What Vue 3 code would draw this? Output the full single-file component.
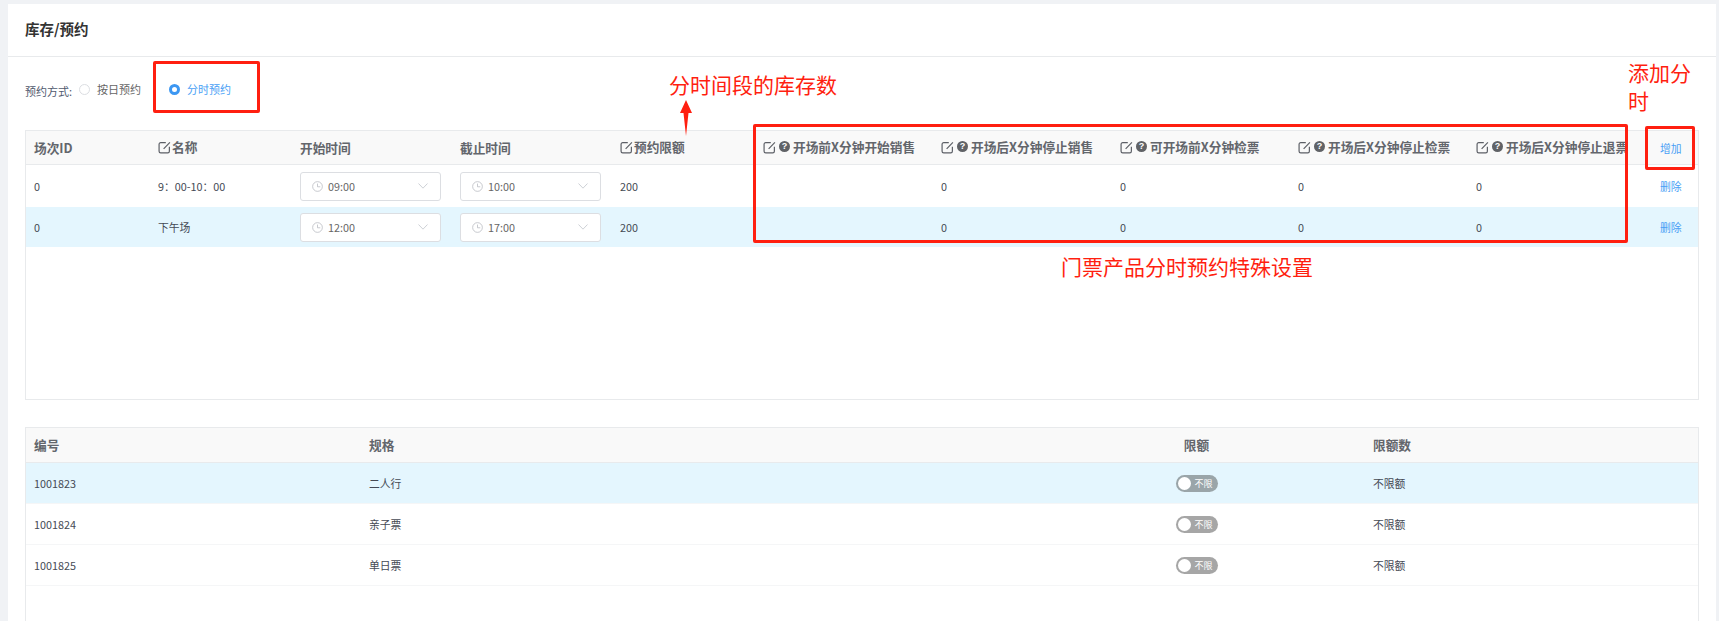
<template>
  <div class="page">
    <div class="page-title">库存/预约</div>

    <div class="mode-row">
      <span class="mode-label">预约方式:</span>
      <label class="radio">
        <span class="radio-dot"></span>
        <span>按日预约</span>
      </label>
      <label class="radio radio-on">
        <span class="radio-dot"></span>
        <span>分时预约</span>
      </label>
    </div>

    <div class="box box-sessions">
      <table class="grid">
        <colgroup>
          <col v-for="w in sessionCols" :key="w.key" :style="{ width: w.width + 'px' }" />
        </colgroup>
        <thead>
          <tr>
            <th>场次ID</th>
            <th><span class="th-in"><svg class="edit" viewBox="0 0 12 12"><path d="M7.2 1.5H2.5a1.5 1.5 0 0 0-1.5 1.5v6.5A1.5 1.5 0 0 0 2.5 11H9a1.5 1.5 0 0 0 1.500-1.500V5.200M5.200 7.300 11 1.300"/></svg>名称</span></th>
            <th>开始时间</th>
            <th>截止时间</th>
            <th><span class="th-in"><svg class="edit" viewBox="0 0 12 12"><path d="M7.2 1.5H2.5a1.5 1.5 0 0 0-1.5 1.5v6.5A1.5 1.5 0 0 0 2.5 11H9a1.5 1.500 0 0 0 1.500-1.500V5.200M5.200 7.300 11 1.300"/></svg>预约限额</span></th>
            <th v-for="h in ruleHeads" :key="h">
              <span class="th-in">
                <svg class="edit" viewBox="0 0 12 12"><path d="M7.2 1.5H2.5a1.5 1.5 0 0 0-1.5 1.5v6.5A1.5 1.5 0 0 0 2.5 11H9a1.5 1.500 0 0 0 1.500-1.500V5.200M5.200 7.300 11 1.300"/></svg>
                <i class="help">?</i>{{ h }}
              </span>
            </th>
            <th class="link">增加</th>
          </tr>
        </thead>
        <tbody>
          <tr v-for="(s, i) in sessions" :key="i" :class="{ 'row-on': s.active }">
            <td>{{ s.id }}</td>
            <td>{{ s.name }}</td>
            <td v-for="t in [s.start, s.end]" :key="t">
              <div class="time">
                <svg class="clock" viewBox="0 0 12 12"><circle cx="6" cy="6" r="5.300"/><path d="M6 2.800V6.300H9"/></svg>
                <span>{{ t }}</span>
                <svg class="chev" viewBox="0 0 10 6"><path d="M.5.5 5 5.200 9.500.5"/></svg>
              </div>
            </td>
            <td>{{ s.limit }}</td>
            <td></td>
            <td>0</td>
            <td>0</td>
            <td>0</td>
            <td>0</td>
            <td class="link">删除</td>
          </tr>
        </tbody>
      </table>
    </div>

    <div class="box box-specs">
      <table class="grid specs">
        <colgroup>
          <col v-for="w in specCols" :key="w.key" :style="{ width: w.width + 'px' }" />
        </colgroup>
        <thead>
          <tr>
            <th>编号</th>
            <th>规格</th>
            <th class="mid">限额</th>
            <th>限额数</th>
          </tr>
        </thead>
        <tbody>
          <tr v-for="s in specs" :key="s.no" :class="{ 'row-on': s.active }">
            <td>{{ s.no }}</td>
            <td>{{ s.name }}</td>
            <td class="mid">
              <span class="switch"><span class="knob"></span>不限</span>
            </td>
            <td>不限额</td>
          </tr>
        </tbody>
      </table>
    </div>

    <!-- 标注 -->
    <div class="mark mark-mode"></div>
    <div class="mark mark-rules"></div>
    <div class="mark mark-add"></div>
    <div class="note note-stock">分时间段的库存数</div>
    <div class="note note-rules">门票产品分时预约特殊设置</div>
    <div class="note note-add">添加分时</div>
    <svg class="arrow" viewBox="0 0 14 36"><path d="M7 0 13 13H9.500L7 36 4.500 13H1Z"/></svg>
  </div>
</template>

<script setup>
const sessionCols = [123, 142, 160, 160, 143, 178, 179, 178, 178, 184, 48].map((width, key) => ({ key, width }))
const specCols = [334, 669, 335, 335].map((width, key) => ({ key, width }))

const ruleHeads = [
  '开场前X分钟开始销售',
  '开场后X分钟停止销售',
  '可开场前X分钟检票',
  '开场后X分钟停止检票',
  '开场后X分钟停止退票'
]

const sessions = [
  { id: 0, name: '9：00-10：00', start: '09:00', end: '10:00', limit: 200, active: false },
  { id: 0, name: '下午场', start: '12:00', end: '17:00', limit: 200, active: true }
]

const specs = [
  { no: 1001823, name: '二人行', active: true },
  { no: 1001824, name: '亲子票', active: false },
  { no: 1001825, name: '单日票', active: false }
]
</script>

<style>
html,
body {
  margin: 0;
  height: 100%;
  background: #f0f2f5;
  overflow: hidden;
}
</style>

<style scoped>
.page {
  position: relative;
  box-sizing: border-box;
  margin: 4px 3px 0 8px;
  height: 617px;
  overflow: hidden;
  background: #fff;
  color: #454a55;
  font-family: "Noto Sans CJK SC", "Noto Sans", sans-serif;
  font-size: 10.8px;
}

.page-title {
  height: 52px;
  line-height: 49px;
  padding-left: 17px;
  border-bottom: 1px solid #e8eaec;
  font-size: 14.5px;
  font-weight: 700;
  color: #333;
}

.mode-row {
  display: flex;
  align-items: center;
  height: 64px;
  padding-left: 17px;
}

.mode-label {
  width: 54px;
  padding-top: 3px;
  color: #515a6e;
  font-size: 11px;
}

.radio {
  display: flex;
  align-items: center;
  width: 90px;
  color: #666;
  font-size: 11px;
}

.radio-dot {
  box-sizing: border-box;
  width: 11px;
  height: 11px;
  margin-right: 7px;
  border: 1px solid #dcdee2;
  border-radius: 50%;
  background: #fff;
}

.radio-on {
  color: #4a9ff5;
}

.radio-on .radio-dot {
  border: 3px solid #3c97f2;
}

.box {
  margin: 0 17px 0 17px;
  border: 1px solid #e8eaec;
  overflow: hidden;
}

.box-sessions {
  box-sizing: border-box;
  height: 270px;
  margin-top: 9px;
}

.box-specs {
  height: 300px;
  margin-top: 27px;
}

.grid {
  width: 1673px;
  border-collapse: collapse;
  table-layout: fixed;
}

.grid th {
  height: 33px;
  padding: 0 0 1px 9px;
  border-bottom: 1px solid #e8eaec;
  background: #f9f9f9;
  color: #63666c;
  font-size: 12.7px;
  font-weight: 700;
  text-align: left;
  white-space: nowrap;
  overflow: hidden;
}

.box-sessions th {
  height: 32px;
}

.grid th:first-child,
.grid td:first-child {
  padding-left: 8px;
}

.grid td {
  padding: 0 0 0 9px;
}

.box-sessions tbody tr:first-child td {
  height: 42px;
}

.box-sessions tbody tr:last-child td {
  height: 40px;
}

.row-on td {
  background: #e4f6fe;
}

.th-in {
  display: inline-flex;
  align-items: center;
}

.edit {
  flex: none;
  width: 13px;
  height: 13px;
  margin-right: 1px;
  margin-top: 2px;
  fill: none;
  stroke: #5c5f66;
  stroke-width: 1.1;
}

.help {
  flex: none;
  width: 11px;
  height: 11px;
  margin: 0 3px 0 2px;
  border-radius: 50%;
  background: #606266;
  color: #fff;
  font-family: "Liberation Sans", sans-serif;
  font-size: 9px;
  font-style: normal;
  font-weight: 700;
  line-height: 11px;
  text-align: center;
}

.grid .link {
  color: #4a9ff5;
  font-size: 10.8px;
  font-weight: 400;
}

.grid th.link {
  padding-top: 1px;
  padding-bottom: 0;
}

.time {
  box-sizing: border-box;
  display: flex;
  align-items: center;
  width: 141px;
  height: 29px;
  padding: 0 12px 0 11px;
  border: 1px solid #dcdee2;
  border-radius: 3px;
  background: #fff;
  color: #666;
}

.clock {
  width: 11px;
  height: 11px;
  margin-right: 5px;
  fill: none;
  stroke: #b4b7bd;
  stroke-width: 0.8;
}

.chev {
  width: 10px;
  height: 6px;
  margin-left: auto;
  fill: none;
  stroke: #c2c5cb;
  stroke-width: 0.8;
}

.specs tbody td {
  height: 40px;
  border-bottom: 1px solid #f5f6f7;
}

.grid .mid {
  padding-left: 0;
  text-align: center;
}

.switch {
  position: relative;
  display: inline-block;
  box-sizing: border-box;
  width: 42px;
  height: 17px;
  padding-left: 19px;
  border-radius: 9px;
  background: #a6a6a6;
  color: #fff;
  font-size: 9px;
  line-height: 17px;
  text-align: left;
  vertical-align: middle;
}

.row-on .switch {
  background: #9aa5a9;
}

.knob {
  position: absolute;
  left: 2px;
  top: 2px;
  width: 13px;
  height: 13px;
  border-radius: 50%;
  background: #fff;
}

.mark {
  position: absolute;
  box-sizing: border-box;
  border: 3px solid #ff1f10;
  border-radius: 2px;
}

.mark-mode {
  left: 145px;
  top: 57px;
  width: 107px;
  height: 52px;
}

.mark-rules {
  left: 745px;
  top: 120px;
  width: 875px;
  height: 119px;
}

.mark-add {
  left: 1637px;
  top: 122px;
  width: 50px;
  height: 44px;
}

.note {
  position: absolute;
  color: #ff1f10;
  font-size: 21px;
  line-height: 28px;
}

.note-stock {
  left: 661px;
  top: 66px;
  white-space: nowrap;
}

.note-rules {
  left: 1053px;
  top: 248px;
  white-space: nowrap;
}

.note-add {
  left: 1620px;
  top: 54px;
  width: 66px;
}

.arrow {
  position: absolute;
  left: 671px;
  top: 96px;
  width: 14px;
  height: 36px;
  fill: #ff1f10;
}
</style>
